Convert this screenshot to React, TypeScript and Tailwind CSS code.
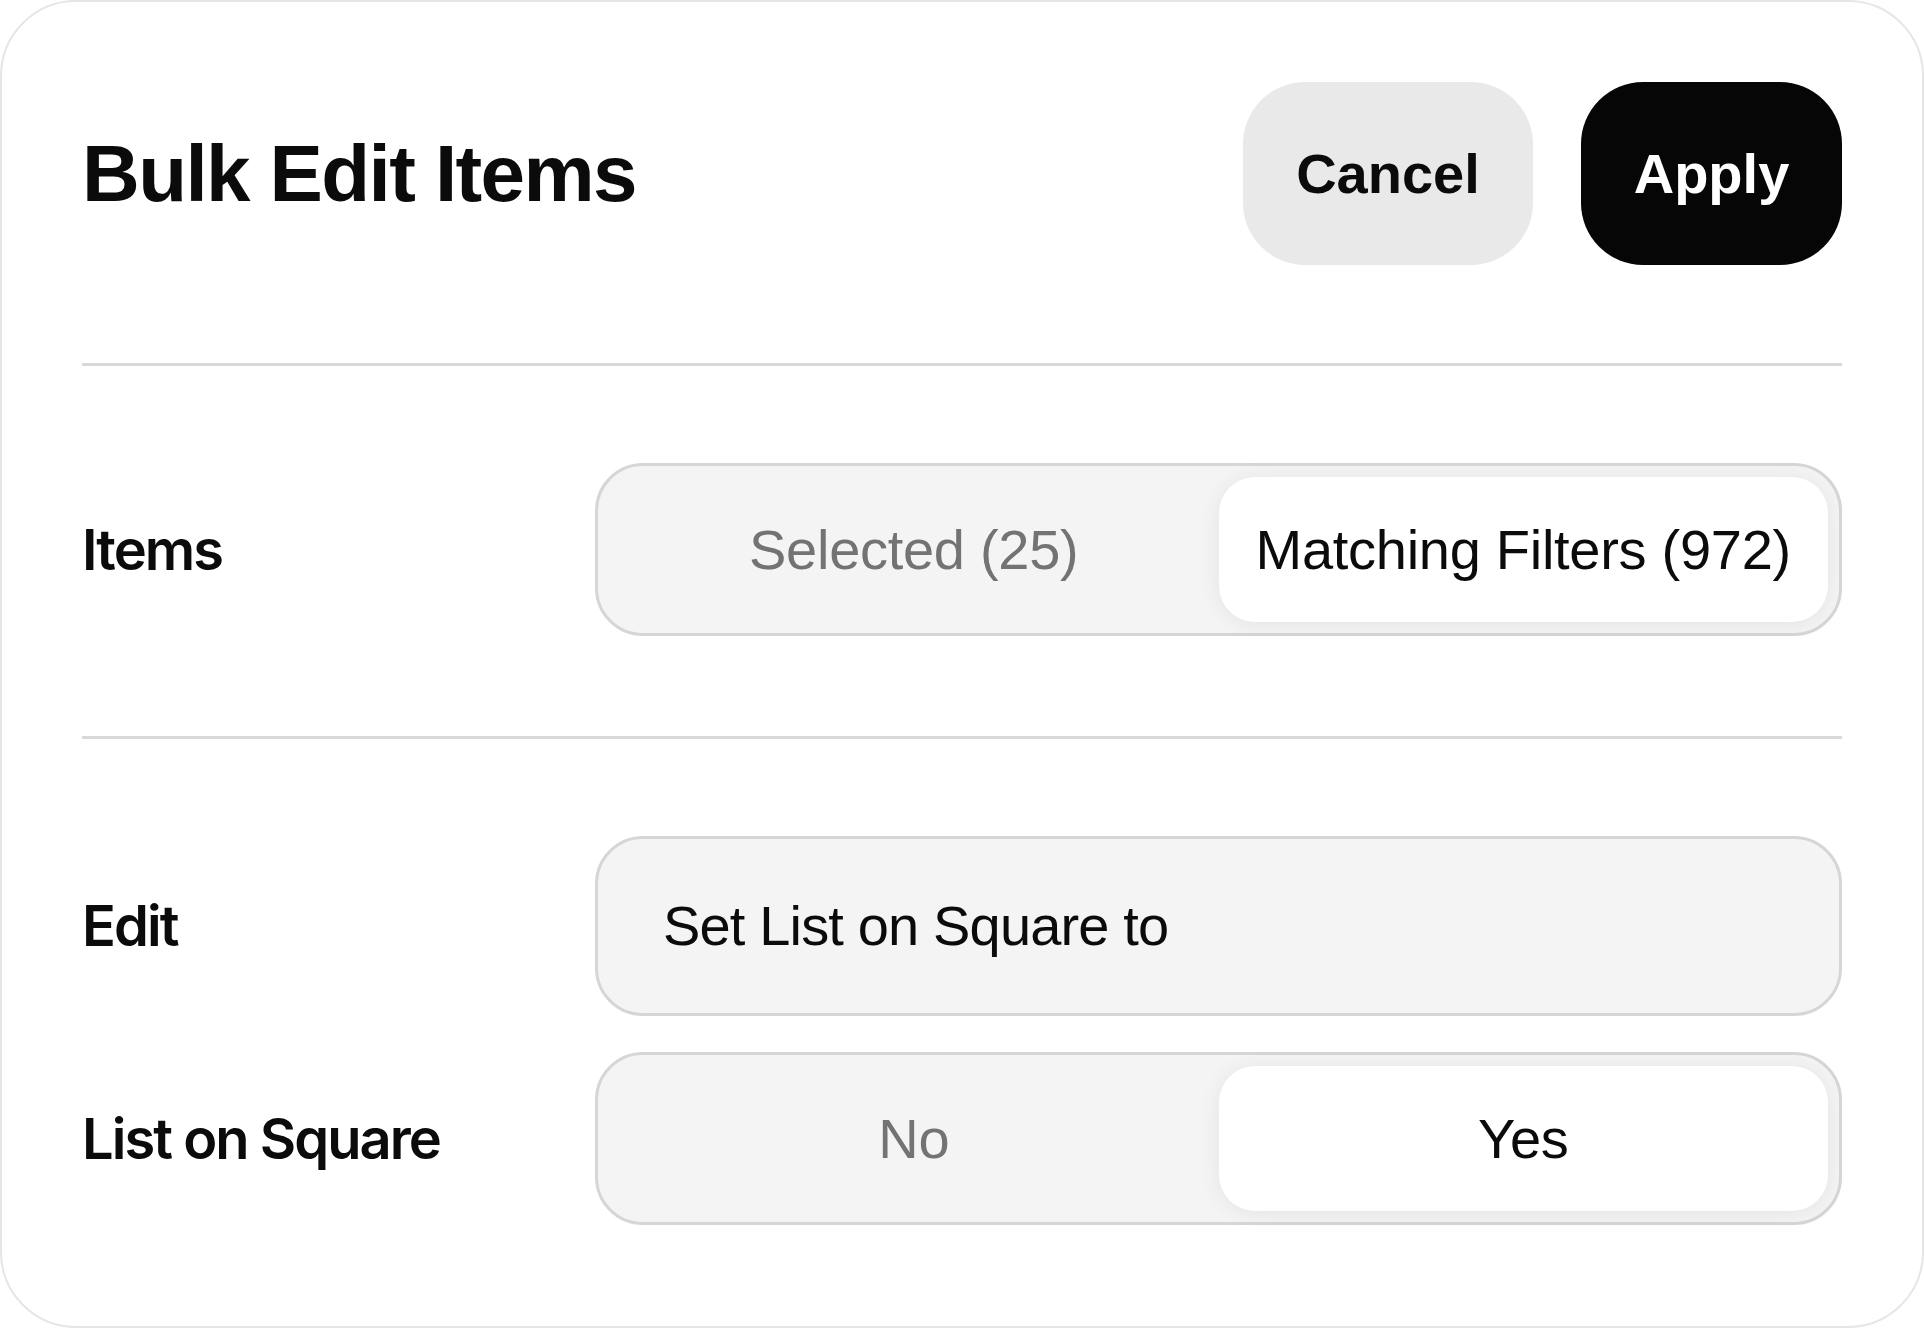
import { useState } from "react";

const SANS = "font-['Liberation_Sans',Arial,sans-serif]";
const LABEL = "font-['Inter','Liberation_Sans',sans-serif]";

function Segmented({
  options,
  value,
  onChange,
}: {
  options: string[];
  value: number;
  onChange: (i: number) => void;
}) {
  return (
    <div className="grid h-[173px] grid-cols-2 rounded-[48px] border-[3px] border-[#d6d6d6] bg-[#f4f4f4] p-[11px]">
      {options.map((opt, i) => (
        <button
          key={opt}
          onClick={() => onChange(i)}
          className={
            i === value
              ? `${SANS} flex items-center justify-center rounded-[36px] bg-white text-[56px] leading-none tracking-[-0.005em] text-[#0b0b0b] shadow-[0_2px_22px_rgba(0,0,0,0.07)]`
              : `${SANS} flex items-center justify-center rounded-[36px] text-[56px] leading-none tracking-[-0.005em] text-[#737373]`
          }
        >
          {opt}
        </button>
      ))}
    </div>
  );
}

function Row({ label, children }: { label: string; children: React.ReactNode }) {
  return (
    <div className="grid grid-cols-[513px_1fr] items-center">
      <span className={`${LABEL} text-[56px] font-semibold leading-none tracking-[-0.035em] text-[#0b0b0b]`}>
        {label}
      </span>
      {children}
    </div>
  );
}

export default function App() {
  const [items, setItems] = useState(1);
  const [listed, setListed] = useState(1);

  return (
    <div className="h-[1328px] w-[1924px] bg-white">
      <div className="h-full rounded-[76px] border-2 border-[#e6e6e6] px-[80px] pt-[80px]">
        <header className="flex h-[183px] items-center justify-between">
          <h1 className={`${SANS} text-[80px] font-bold leading-none tracking-[-0.02em] text-[#0b0b0b]`}>
            Bulk Edit Items
          </h1>
          <div className="flex h-full gap-[48px]">
            <button className={`${SANS} h-full w-[290px] rounded-[62px] bg-[#e9e9e9] text-[56px] font-bold text-[#0b0b0b]`}>
              Cancel
            </button>
            <button className={`${SANS} h-full w-[261px] rounded-[62px] bg-[#060606] text-[56px] font-bold text-white`}>
              Apply
            </button>
          </div>
        </header>

        <div className="mt-[98px] h-[3px] bg-[#d9d9d9]" />

        <div className="mt-[97px]">
          <Row label="Items">
            <Segmented
              options={["Selected (25)", "Matching Filters (972)"]}
              value={items}
              onChange={setItems}
            />
          </Row>
        </div>

        <div className="mt-[100px] h-[3px] bg-[#d9d9d9]" />

        <div className="mt-[97px] flex flex-col gap-[36px]">
          <Row label="Edit">
            <div className={`${SANS} flex h-[180px] items-center rounded-[48px] border-[3px] border-[#d6d6d6] bg-[#f4f4f4] pl-[65px] text-[56px] leading-none tracking-[-0.015em] text-[#0b0b0b]`}>
              Set List on Square to
            </div>
          </Row>
          <Row label="List on Square">
            <Segmented options={["No", "Yes"]} value={listed} onChange={setListed} />
          </Row>
        </div>
      </div>
    </div>
  );
}
